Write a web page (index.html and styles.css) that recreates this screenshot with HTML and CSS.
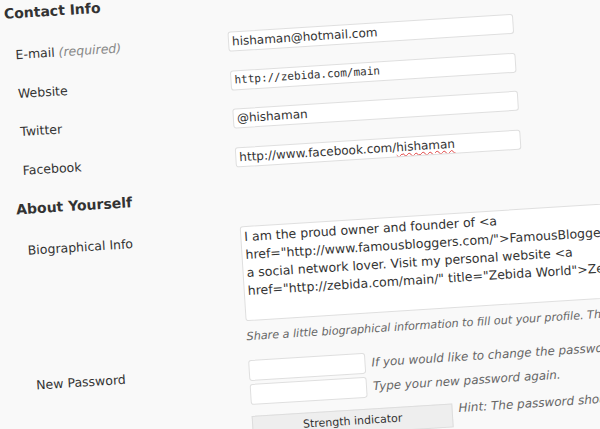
FILE: index.html
```html
<!DOCTYPE html>
<html>
<head>
<meta charset="utf-8">
<link rel="stylesheet" href="styles.css">
</head>
<body>
<div class="page">
  <h2 class="section">Contact Info</h2>
  <div class="rows">
    <div class="row">
      <div class="label">E-mail <span class="req">(required)</span></div>
      <div class="field"><div class="input">hishaman@hotmail.com</div></div>
    </div>
    <div class="row">
      <div class="label">Website</div>
      <div class="field"><div class="input mono">http://zebida.com/main</div></div>
    </div>
    <div class="row">
      <div class="label">Twitter</div>
      <div class="field"><div class="input">@hishaman</div></div>
    </div>
    <div class="row">
      <div class="label">Facebook</div>
      <div class="field"><div class="input">http://www.facebook.com/<span class="spell">hishaman</span></div></div>
    </div>
  </div>

  <h2 class="section about">About Yourself</h2>
  <div class="row bio-row">
    <div class="label">Biographical Info</div>
    <div class="field">
      <div class="textarea">I am the proud owner and founder of &lt;a
href="http://www.famousbloggers.com/"&gt;FamousBloggers&lt;/a&gt;, and
a social network lover. Visit my personal website &lt;a
href="http://zebida.com/main/" title="Zebida World"&gt;Zebida&lt;/a&gt;.</div>
      <p class="desc">Share a little biographical information to fill out your profile. This may be shown publicly.</p>
    </div>
  </div>

  <div class="row pass-row">
    <div class="label">New Password</div>
    <div class="field">
      <div class="pw-line">
        <div class="input pw"></div>
        <span class="note">If you would like to change the password type a new one. Otherwise leave this blank.</span>
      </div>
      <div class="pw-line">
        <div class="input pw"></div>
        <span class="note">Type your new password again.</span>
      </div>
      <div class="pw-line strength-line">
        <div class="strength">Strength indicator</div>
        <span class="note hint">Hint: The password should be at least seven characters long.</span>
      </div>
    </div>
  </div>
</div>
</body>
</html>
```

FILE: styles.css
```css
html {
  background: #f9f9f9;
}

body {
  margin: 0;
  width: 600px;
  height: 429px;
  overflow: hidden;
  font-family: "DejaVu Sans", Verdana, sans-serif;
  color: #333;
}

.page {
  width: 760px;
  padding: 5px 0 0 3px;
  transform: rotate(-3.6deg);
  transform-origin: 0 0;
}

.section {
  margin: 0;
  font-size: 14px;
  line-height: 18px;
  font-weight: bold;
  color: #333;
}

.rows {
  margin-top: 23px;
  display: flex;
  flex-direction: column;
  gap: 18.5px;
}

.row {
  display: grid;
  grid-template-columns: 222px 1fr;
  align-items: start;
}

.label {
  padding-left: 9px;
  padding-top: 1px;
  font-size: 12.5px;
  line-height: 18px;
  color: #333;
  white-space: nowrap;
}

.req {
  font-style: italic;
  color: #888;
}

.input {
  box-sizing: border-box;
  width: 286px;
  height: 20px;
  background: #fff;
  border: 1px solid #dfdfdf;
  border-radius: 3px;
  padding: 0 3px;
  font-size: 12px;
  line-height: 18px;
  color: #333;
  white-space: nowrap;
  overflow: hidden;
}

.mono {
  font-family: "DejaVu Sans Mono", "Liberation Mono", monospace;
  font-size: 11px;
}

.spell {
  text-decoration: underline wavy #e04040;
  text-decoration-thickness: 1px;
  text-underline-offset: 2px;
}

.about {
  margin-top: 19px;
}

.bio-row {
  margin-top: 22px;
}

.bio-row .label {
  padding-top: 2px;
}

.textarea {
  box-sizing: border-box;
  width: 520px;
  height: 95px;
  background: #fff;
  border: 1px solid #dfdfdf;
  border-radius: 3px;
  padding: 1px 3px;
  font-size: 12.5px;
  line-height: 18px;
  color: #333;
  white-space: pre;
  overflow: hidden;
}

.desc {
  margin: 7px 0 0;
  font-style: italic;
  color: #666;
  font-size: 11.2px;
  line-height: 18px;
  white-space: nowrap;
}

.pass-row {
  margin-top: 14px;
}

.pass-row .label {
  padding-top: 3px;
}

.pw-line {
  display: flex;
  align-items: center;
  gap: 6px;
}

.pw-line + .pw-line {
  margin-top: 3px;
}

.input.pw {
  width: 117px;
  height: 21px;
}

.note {
  font-style: italic;
  color: #666;
  font-size: 11.9px;
  line-height: 18px;
  white-space: nowrap;
}

.pw-line.strength-line {
  margin-top: 11px;
  align-items: flex-start;
}

.strength {
  box-sizing: border-box;
  width: 201px;
  height: 24px;
  flex: none;
  background: #eee;
  border: 1px solid #ddd;
  text-align: center;
  font-size: 11px;
  line-height: 22px;
  color: #333;
}

.hint {
  margin-top: -4px;
  font-size: 12px;
}
```
